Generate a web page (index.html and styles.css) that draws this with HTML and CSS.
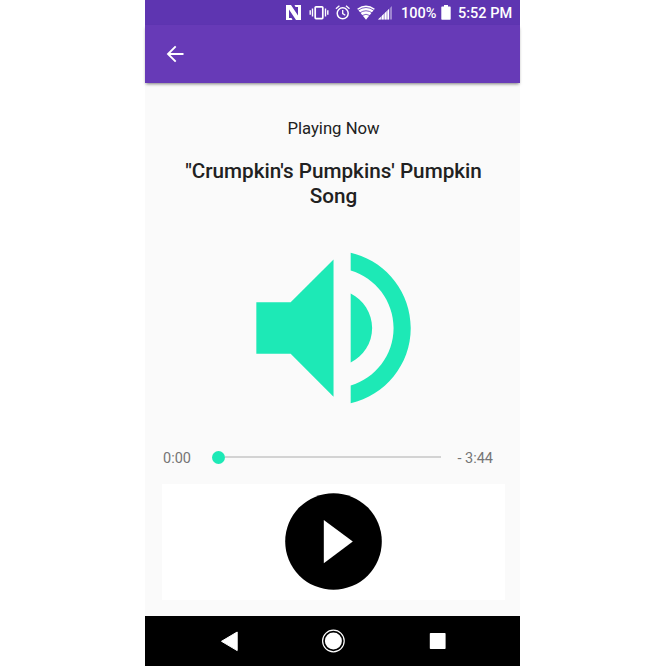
FILE: index.html
```html
<!DOCTYPE html>
<html lang="en">
<head>
<meta charset="utf-8">
<title>Playing Now</title>
<link rel="stylesheet" href="styles.css">
</head>
<body>
<div class="phone">
  <div class="status">
    <svg class="status-icons" viewBox="0 0 112 25" width="112" height="25">
      <path fill="#fff" d="M1 5H4V20H1ZM13 5H16V20H13ZM4 5H6L13 15.500V20H11L4 9.500ZM9.500 5H13V7H10.500ZM4 18H6.500L7.500 20H4Z"/>
      <g fill="none" stroke="#fff">
        <rect x="30.200" y="6.800" width="7.600" height="11.800" rx=".8" stroke-width="1.700"/>
        <path stroke-width="1.400" d="M27.500 8.500v8M25.200 10.300v4.400M40.500 8.500v8M42.800 10.300v4.400"/>
        <circle cx="57.700" cy="13.300" r="5.500" stroke-width="1.500"/>
        <path stroke-width="1.300" d="M57.700 10v3.600l2.600 1.600M50.900 8.800l3.500-3M64.500 8.800l-3.500-3"/>
      </g>
      <path fill="#fff" d="M72.200 8.800Q81 2.200 89.800 8.800L81 19.800Z"/>
      <path fill="none" stroke="#5e35b1" stroke-width=".8" d="M73 10.300Q81 4.700 89 10.300M74.500 13Q81 8.500 87.500 13M77 15.600Q81 12.900 85 15.600"/>
      <path fill="#fff" opacity=".4" d="M93 19.500L107 6v13.500Z"/>
      <path fill="#fff" d="M93 19.500L104 9v10.500Z"/>
      <path stroke="#5e35b1" stroke-width=".7" opacity=".8" d="M96.300 14v6M99.200 11v9M102 9v11M104.500 6v14"/>
    </svg>
    <span class="percent">100%</span>
    <svg class="battery" viewBox="0 0 10 15" width="10" height="15"><path fill="#fff" d="M3 0h4v1.500h2q.7 0 .7.800v11.700q0 .8-.7.800H1q-.7 0-.7-.8V2.300q0-.8.700-.8h2z"/></svg>
    <span class="clock">5:52 PM</span>
  </div>
  <header class="appbar">
    <svg viewBox="0 0 18 18" width="18" height="18" fill="none" stroke="#fff" stroke-width="1.900"><path d="M17.500 9H2.700M9.700 1.300L2 9l7.700 7.700"/></svg>
  </header>
  <main class="player">
    <p class="label">Playing Now</p>
    <h1 class="title">"Crumpkin's Pumpkins' Pumpkin Song</h1>
    <svg class="speaker" viewBox="2.960 3.020 18 18" width="154.400" height="154.400"><path d="M3 9v6h4l5 5V4L7 9H3zm13.500 3c0-1.770-1.020-3.290-2.500-4.030v8.050c1.480-.73 2.500-2.250 2.500-4.020zM14 3.230v2.060c2.890.86 5 3.540 5 6.710s-2.110 5.850-5 6.710v2.060c4.010-.91 7-4.490 7-8.770s-2.990-7.860-7-8.770z"/></svg>
    <div class="progress">
      <span class="time">0:00</span>
      <div class="track"><i class="thumb"></i><i class="line"></i></div>
      <span class="time">- 3:44</span>
    </div>
    <div class="controls">
      <svg viewBox="0 0 97 97" width="97" height="97"><circle cx="48.500" cy="48.500" r="48.300"/><path fill="#fff" d="M38.800 27v43.300L67.800 48.500Z"/></svg>
    </div>
  </main>
  <nav class="navbar">
    <svg viewBox="0 0 24 24" width="24" height="24"><path fill="#fff" stroke="#fff" stroke-linejoin="round" d="M20.200 3v18.600L4.500 12.300Z"/></svg>
    <svg viewBox="0 0 24 24" width="24" height="24"><circle cx="12.400" cy="12" r="10.800" fill="none" stroke="#fff" stroke-width="1.200"/><circle cx="12.400" cy="12" r="8.500" fill="#fff"/></svg>
    <svg viewBox="0 0 24 24" width="24" height="24"><rect x="4.800" y="4" width="15.800" height="16" rx=".8" fill="#fff"/></svg>
  </nav>
</div>
</body>
</html>
```
FILE: styles.css
```css
* { box-sizing: border-box; }
body {
  margin: 0;
  background: #fff;
  font-family: Roboto, sans-serif;
}
.phone {
  display: flex;
  flex-direction: column;
  width: 375px;
  height: 666px;
  margin-left: 145px;
  background: #fafafa;
}
.status {
  display: flex;
  align-items: center;
  height: 25px;
  padding-left: 140px;
  background: #5e35b1;
  color: #fff;
  font-size: 14.500px;
  font-weight: 500;
  line-height: 25px;
  white-space: nowrap;
}
.status span { padding-top: 1px; }
.percent { width: 40px; margin-left: 4px; }
.battery { width: 10px; }
.clock { margin-left: 7px; }
.appbar {
  display: flex;
  align-items: center;
  height: 58px;
  padding-left: 21px;
  background: #673ab7;
  box-shadow: 0 2px 3px -1px rgba(0, 0, 0, .5);
}
.player {
  flex: 1;
  display: flex;
  flex-direction: column;
  padding: 36px 15px 16px 17px;
  color: #212121;
}
.label {
  margin: 0;
  font-size: 16.700px;
  line-height: 20px;
  text-align: center;
}
.title {
  width: 320px;
  margin: 20px auto 0;
  font-size: 20.700px;
  font-weight: 500;
  line-height: 25px;
  text-align: center;
}
.speaker {
  align-self: center;
  margin-top: 42px;
  fill: #1de9b6;
}
.progress {
  display: flex;
  align-items: center;
  justify-content: space-between;
  height: 20px;
  margin-top: 42px;
  padding: 0 12px 0 1px;
}
.time {
  padding-top: 3px;
  color: #757575;
  font-size: 14.500px;
  line-height: 18px;
}
.track {
  display: flex;
  align-items: center;
  width: 229px;
  margin-left: 5px;
}
.thumb {
  width: 13px;
  height: 13px;
  border-radius: 50%;
  background: #1de9b6;
}
.line {
  flex: 1;
  height: 2px;
  background: #d3d3d3;
}
.controls {
  display: flex;
  align-items: center;
  justify-content: center;
  height: 116px;
  margin-top: auto;
  padding-bottom: 2px;
  background: #fff;
}
.navbar {
  display: flex;
  align-items: center;
  justify-content: space-between;
  height: 50px;
  padding: 0 71px 0 72px;
  background: #000;
}
```
